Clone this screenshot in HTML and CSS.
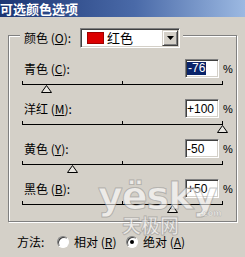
FILE: index.html
```html
<!DOCTYPE html>
<html lang="zh-CN">

<head>
  <meta charset="UTF-8">
  <meta name="viewport" content="width=device-width, initial-scale=1.0">
  <title>可选颜色选项</title>
  <link rel="stylesheet" href="styles.css">
</head>

<body>
  <div class="titlebar">可选颜色选项</div>

  <div class="group">
    <div class="group-head">
      <span class="head-label">颜色 (<u>O</u>):</span>
      <div class="combo">
        <span class="swatch"></span>
        <span class="combo-text">红色</span>
        <span class="combo-btn">
          <svg width="7" height="4" viewBox="0 0 7 4"><polygon points="0,0 7,0 3.5,4" fill="#000" /></svg>
        </span>
      </div>
    </div>

    <div class="rows">
      <div class="row">
        <div class="row-top">
          <span class="label">青色 (<u>C</u>):</span>
          <span class="field"><span class="sel">-76</span></span>
          <span class="pct">%</span>
        </div>
        <div class="track">
          <svg class="thumb" style="left:19px" width="11" height="8" viewBox="0 0 11 8"><polygon points="5.5,0.5 10.5,7.5 0.5,7.5" fill="#e8e6e0" stroke="#000" /></svg>
        </div>
      </div>

      <div class="row">
        <div class="row-top">
          <span class="label">洋红 (<u>M</u>):</span>
          <span class="field">+100</span>
          <span class="pct">%</span>
        </div>
        <div class="track">
          <svg class="thumb" style="left:195px" width="11" height="8" viewBox="0 0 11 8"><polygon points="5.5,0.5 10.5,7.5 0.5,7.5" fill="#e8e6e0" stroke="#000" /></svg>
        </div>
      </div>

      <div class="row">
        <div class="row-top">
          <span class="label">黄色 (<u>Y</u>):</span>
          <span class="field">-50</span>
          <span class="pct">%</span>
        </div>
        <div class="track">
          <svg class="thumb" style="left:45px" width="11" height="8" viewBox="0 0 11 8"><polygon points="5.5,0.5 10.5,7.5 0.5,7.5" fill="#e8e6e0" stroke="#000" /></svg>
        </div>
      </div>

      <div class="row">
        <div class="row-top">
          <span class="label">黑色 (<u>B</u>):</span>
          <span class="field">+50</span>
          <span class="pct">%</span>
        </div>
        <div class="track">
          <svg class="thumb" style="left:145px" width="11" height="8" viewBox="0 0 11 8"><polygon points="5.5,0.5 10.5,7.5 0.5,7.5" fill="#e8e6e0" stroke="#000" /></svg>
        </div>
      </div>
    </div>
  </div>

  <div class="method">
    <span class="method-label">方法:</span>
    <span class="opt opt-rel"><span class="radio"></span><span class="opt-text">相对 (<u>R</u>)</span></span>
    <span class="opt"><span class="radio is-checked"></span><span class="opt-text">绝对 (<u>A</u>)</span></span>
  </div>

  <!-- watermark -->
  <div class="wm wm-logo">yësky</div>
  <div class="wm wm-com">.com</div>
  <div class="wm wm-cn">天极网</div>
</body>

</html>
```

FILE: styles.css
```css
html {
  box-sizing: border-box;
  font-family: "Noto Sans CJK SC", "Liberation Sans", sans-serif;
  font-size: 12px;
}

*,
*::before,
*::after {
  box-sizing: border-box;
}

body {
  position: relative;
  margin: 0;
  width: 245px;
  height: 257px;
  overflow: hidden;
  background-color: #d4d0c8;
  color: #000;
}

u {
  text-decoration: underline;
  text-underline-offset: 1px;
}

.titlebar {
  height: 17px;
  line-height: 17px;
  font-size: 13px;
  font-weight: bold;
  color: #fff;
  background: linear-gradient(to right, #1b3573, #4a6aa8 55%, #9cb9e2);
}

.group {
  margin: 18px 0 0 8px;
  width: 229px;
  height: 187px;
  border: 1px solid #808080;
  box-shadow: 1px 1px 0 #fff, inset 1px 1px 0 #fff;
}

.group-head {
  display: flex;
  align-items: center;
  width: fit-content;
  height: 20px;
  margin: -8px 0 0 11px;
  padding: 0 3px 0 4px;
  background-color: #d4d0c8;
}

.head-label {
  width: 56px;
  line-height: 16px;
}

.combo {
  display: flex;
  align-items: center;
  width: 100px;
  height: 20px;
  background-color: #fff;
  border: 1px solid;
  border-color: #808080 #fff #fff #808080;
  box-shadow: inset 1px 1px 0 #404040, inset -1px -1px 0 #d4d0c8;
}

.swatch {
  width: 17px;
  height: 12px;
  margin-left: 6px;
  background-color: #dc0000;
  border: 1px solid #a00000;
}

.combo-text {
  margin-left: 3px;
  line-height: 16px;
  font-size: 13px;
}

.combo-btn {
  display: flex;
  justify-content: center;
  align-items: center;
  width: 16px;
  height: 16px;
  margin-left: auto;
  margin-right: 1px;
  background-color: #d4d0c8;
  border: 1px solid;
  border-color: #d4d0c8 #404040 #404040 #d4d0c8;
  box-shadow: inset 1px 1px 0 #fff, inset -1px -1px 0 #808080;
}

.rows {
  margin-top: 11px;
}

.row {
  height: 40px;
}

.row-top {
  display: flex;
  align-items: center;
  height: 19px;
  padding-left: 15px;
}

.label {
  width: 161px;
  line-height: 16px;
}

.field {
  display: flex;
  align-items: center;
  width: 34px;
  height: 19px;
  padding-left: 1px;
  font-family: "Liberation Sans", sans-serif;
  font-size: 12px;
  background-color: #fff;
  border: 1px solid;
  border-color: #808080 #fff #fff #808080;
  box-shadow: inset 1px 1px 0 #404040, inset -1px -1px 0 #d4d0c8;
}

.sel {
  padding: 0 1px;
  line-height: 13px;
  background-color: #0a246a;
  color: #fff;
}

.pct {
  margin-left: 4px;
  font-family: "Liberation Sans", sans-serif;
  font-size: 11px;
}

.track {
  position: relative;
  width: 201px;
  height: 1px;
  margin: 6px 0 0 13px;
  background-color: #000;
}

.track::before {
  content: "";
  position: absolute;
  left: 0;
  right: 0;
  bottom: 0;
  height: 4px;
  border-left: 1px solid #000;
  border-right: 1px solid #000;
}

.track::after {
  content: "";
  position: absolute;
  left: 100px;
  bottom: 0;
  width: 1px;
  height: 4px;
  background-color: #000;
}

.thumb {
  position: absolute;
  top: 1px;
  display: block;
}

.method {
  display: flex;
  align-items: center;
  height: 16px;
  margin-top: 12px;
  padding-left: 17px;
  line-height: 16px;
  white-space: nowrap;
}

.method-label {
  width: 40px;
}

.opt {
  display: flex;
  align-items: center;
  gap: 5px;
}

.opt-rel {
  width: 69px;
}

.opt-text {
  white-space: nowrap;
}

.radio {
  position: relative;
  flex: none;
  width: 12px;
  height: 12px;
  border-radius: 50%;
  background-color: #fff;
  border: 1px solid;
  border-color: #808080 #fff #fff #808080;
  box-shadow: inset 1px 1px 0 #404040;
}

.radio.is-checked::after {
  content: "";
  position: absolute;
  left: 3px;
  top: 3px;
  width: 4px;
  height: 4px;
  border-radius: 50%;
  background-color: #000;
}

.wm {
  position: absolute;
  font-family: "DejaVu Sans", sans-serif;
  font-weight: bold;
  color: rgba(255, 255, 255, 0.6);
  -webkit-text-stroke: 1px rgba(110, 110, 110, 0.4);
  pointer-events: none;
}

.wm-logo {
  left: 98px;
  top: 176px;
  font-size: 38px;
  line-height: 40px;
  letter-spacing: -1px;
}

.wm-com {
  left: 200px;
  top: 209px;
  font-size: 8px;
  line-height: 10px;
  -webkit-text-stroke: 0.5px rgba(110, 110, 110, 0.4);
}

.wm-cn {
  left: 122px;
  top: 215px;
  font-family: "Noto Sans CJK SC", sans-serif;
  font-size: 19px;
  line-height: 19px;
}
```
